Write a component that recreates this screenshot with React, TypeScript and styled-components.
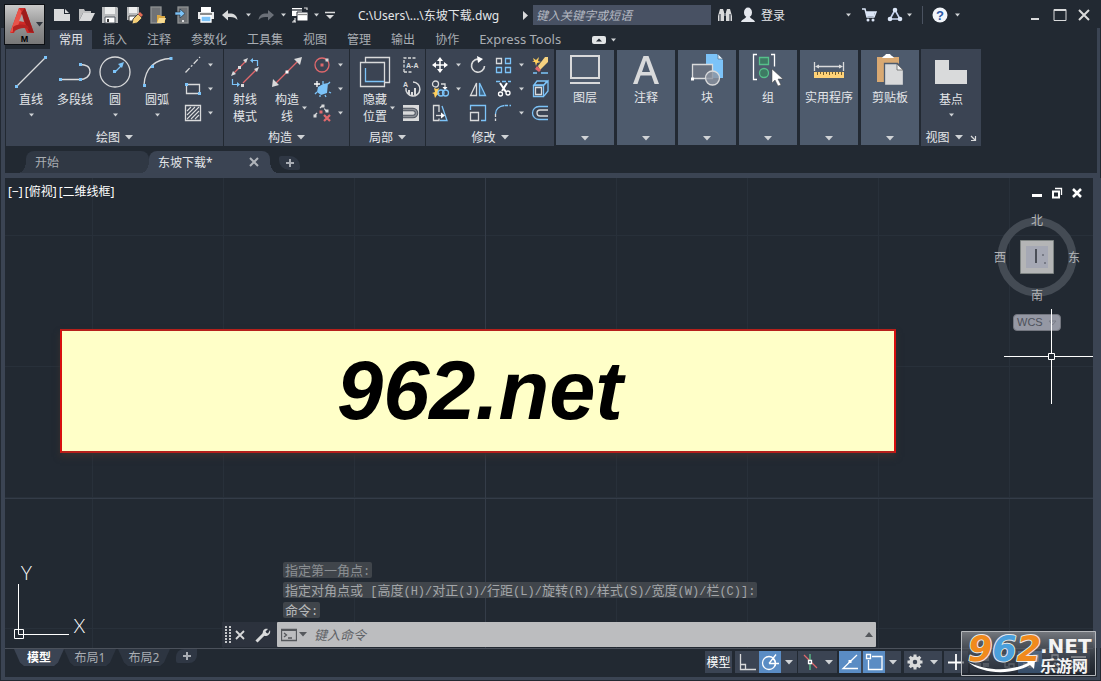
import React from "react";
import styled, { createGlobalStyle } from "styled-components";

const c = {
  base: "#222932",
  panel: "#3b4453",
  panelLight: "#4e5b6d",
  text: "#e4e6e9",
  muted: "#a9adb3",
  icon: "#d9dadb",
  blue: "#7cc3f8",
  red: "#e0686c",
  accent: "#5a8cc4",
};

const Global = createGlobalStyle`
  *, *::before, *::after { box-sizing: border-box; }
  body {
    margin: 0;
    background: ${c.base};
    color: ${c.text};
    font: 12px/17px "Noto Sans", "Noto Sans CJK SC", sans-serif;
  }
  button, input {
    font: inherit;
    color: inherit;
    border: 0;
    padding: 0;
    margin: 0;
    background: none;
    border-radius: 0;
    outline: none;
  }
  button { cursor: pointer; }
  svg { display: block; flex: none; }
`;

/* ---------- shell ---------- */

const Window = styled.div`
  position: relative;
  display: flex;
  flex-direction: column;
  min-height: 100vh;
  background:
    linear-gradient(${c.panel}, ${c.panel}) 1px 28px / 4px calc(100% - 29px) no-repeat,
    linear-gradient(${c.panel}, ${c.panel}) calc(100% - 1px) 28px / 3px calc(100% - 29px) no-repeat,
    linear-gradient(${c.panel}, ${c.panel}) 1px calc(100% - 1px) / calc(100% - 2px) 3px no-repeat,
    ${c.base};
`;

const Header = styled.header`
  display: grid;
  grid-template-columns: 50px 1fr;
  height: 49px;
`;

const AppButton = styled.button`
  width: 41px;
  height: 41px;
  margin: 4px 0 0 4px;
  border: 1px solid #0d1014;
  background: linear-gradient(#c9c9c9, #8f8f8f 60%, #777);
`;

const HeaderRows = styled.div`
  display: grid;
  grid-template-rows: 30px 19px;
  min-width: 0;
`;

const TitleBar = styled.div`
  display: flex;
  align-items: center;
`;

const IconButton = styled.button<{ $w?: number; $h?: number }>`
  display: flex;
  align-items: center;
  justify-content: center;
  flex: none;
  width: ${(p) => p.$w ?? 24}px;
  height: ${(p) => p.$h ?? 24}px;
`;

const FileTitle = styled.div`
  flex: 0 0 181px;
  padding-left: 18px;
  white-space: nowrap;
`;

const Search = styled.input`
  width: 178px;
  height: 20px;
  margin-left: 4px;
  padding: 0 3px;
  background: #485163;
  font-style: italic;
  &::placeholder { color: #b4b9c2; opacity: 1; }
`;

const SignIn = styled.button`
  display: flex;
  align-items: center;
  width: 113px;
  height: 24px;
  white-space: nowrap;
  span { flex: 1; text-align: left; padding-left: 3px; }
`;

const Rule = styled.span`
  width: 1px;
  height: 18px;
  margin: 0 5px 0 6px;
  background: #4a5260;
`;

const Spacer = styled.span`
  flex: 1;
`;

const RibbonTabs = styled.nav`
  display: flex;
  gap: 2px;
`;

const RibbonTab = styled.button<{ $active?: boolean; $latin?: boolean }>`
  height: 19px;
  padding: 0 9px;
  white-space: nowrap;
  font-size: ${(p) => (p.$latin ? 13 : 12)}px;
  color: ${(p) => (p.$active ? c.text : c.muted)};
  background: ${(p) => (p.$active ? c.panel : "none")};
`;

const ToggleGroup = styled.div`
  display: flex;
  align-items: center;
  margin-left: 18px;
`;

/* ---------- ribbon ---------- */

const Ribbon = styled.section`
  display: flex;
  gap: 1px;
  height: 97px;
  padding-left: 6px;
`;

const Panel = styled.div<{ $w: number }>`
  display: flex;
  flex-direction: column;
  flex: 0 0 ${(p) => p.$w}px;
  background: ${c.panel};
`;

const PanelBody = styled.div<{ $pad?: number }>`
  display: flex;
  flex: 1;
  padding-left: ${(p) => p.$pad ?? 0}px;
`;

const PanelFooter = styled.button`
  display: flex;
  align-items: center;
  justify-content: center;
  gap: 5px;
  height: 18px;
`;

const Large = styled.button<{ $w: number }>`
  display: flex;
  flex-direction: column;
  align-items: center;
  gap: 3px;
  flex: 0 0 ${(p) => p.$w}px;
  padding-top: 7px;
  height: 79px;
`;

const LargeLabel = styled.span<{ $arrow?: boolean }>`
  display: grid;
  grid-template-columns: ${(p) => (p.$arrow ? "8px 26px 8px" : "auto")};
  align-items: center;
  justify-items: center;
  line-height: 17px;
  white-space: nowrap;
`;

const TwoLines = styled.span`
  white-space: normal;
  text-align: center;
  grid-column: 2;
`;

const Tools = styled.div<{ $cols: string; $ml?: number }>`
  display: grid;
  grid-template-columns: ${(p) => p.$cols};
  grid-auto-rows: 24px;
  align-content: start;
  align-items: center;
  padding-top: 4px;
  margin-left: ${(p) => p.$ml ?? 4}px;
`;

const CollapsedGroup = styled.div`
  display: flex;
  gap: 3px;
  margin: 1px;
`;

const Collapsed = styled.button`
  display: flex;
  flex-direction: column;
  align-items: center;
  gap: 2px;
  flex: 0 0 58px;
  padding: 3px 0 4px;
  background: ${c.panelLight};
  white-space: nowrap;
  svg:last-child { margin-top: auto; }
`;

/* ---------- file tabs ---------- */

const FileTabs = styled.div`
  display: flex;
  align-items: flex-end;
  height: 32px;
  margin-left: 4px;
  margin-right: 3px;
  padding-left: 22px;
  border-bottom: 5px solid ${c.panel};
`;

const FileTab = styled.div<{ $active?: boolean; $w: number }>`
  --fill: ${(p) => (p.$active ? c.panel : "#303844")};
  position: relative;
  display: flex;
  align-items: center;
  width: ${(p) => p.$w}px;
  height: 22px;
  padding: 0 8px 0 9px;
  background: var(--fill);
  border-radius: 8px 8px 0 0;
  color: ${(p) => (p.$active ? c.text : c.muted)};
  z-index: ${(p) => (p.$active ? 1 : 0)};
  button:first-child { flex: 1; text-align: left; }
  &::before, &::after {
    content: "";
    position: absolute;
    bottom: 0;
    width: 8px;
    height: 12px;
  }
  &::before { left: -8px; background: radial-gradient(ellipse 8px 12px at 0 0, transparent 98%, var(--fill)); }
  &::after { right: -8px; background: radial-gradient(ellipse 8px 12px at 100% 0, transparent 98%, var(--fill)); }
`;

const AddTab = styled.button<{ $bottom?: boolean }>`
  display: flex;
  align-items: center;
  justify-content: center;
  width: 21px;
  height: 14px;
  margin-bottom: 3px;
  margin-left: ${(p) => (p.$bottom ? 4 : 9)}px;
  background: #2f3744;
  border-radius: ${(p) => (p.$bottom ? "8px 0 8px 2px" : "2px 10px 2px 10px")};
`;

/* ---------- drawing area ---------- */

const line = "#28303a";
const Canvas = styled.main`
  position: relative;
  flex: 1;
  min-height: 470px;
  margin: 0 8px 0 5px;
  background:
    linear-gradient(#343c48, #343c48) 480px 0 / 1px 100% no-repeat,
    linear-gradient(#343c48, #343c48) 0 320px / 100% 1px no-repeat,
    linear-gradient(90deg, ${line} 1px, transparent 1px) 87px 0 / 131px 131px,
    linear-gradient(${line} 1px, transparent 1px) 0 57px / 131px 131px,
    ${c.base};
  box-shadow: 8px 0 0 ${c.panel};
`;

const ViewLabels = styled.div`
  display: flex;
  gap: 2px;
  padding: 5px 0 0 3px;
  color: #fff;
  button { white-space: nowrap; }
`;

const ViewControls = styled.div`
  position: absolute;
  top: 7px;
  right: 6px;
  display: flex;
`;

const Banner = styled.h1`
  position: absolute;
  top: 151px;
  left: 55px;
  right: 197px;
  height: 124px;
  margin: 0;
  padding-left: 4px;
  display: flex;
  align-items: center;
  justify-content: center;
  border: 2px solid #b6201b;
  border-left-color: #d80f0f;
  border-right-color: #d80f0f;
  background: #ffffc8;
  box-shadow: 0 4px 6px #35302f;
  color: #000;
  font: italic bold 83px/120px "Liberation Sans", sans-serif;
`;

const Cube = styled.div`
  position: absolute;
  top: 32px;
  right: 12px;
  width: 88px;
  height: 94px;
`;

const Wcs = styled.button`
  position: absolute;
  top: 136px;
  right: 32px;
  display: flex;
  align-items: center;
  gap: 5px;
  width: 48px;
  height: 17px;
  padding-left: 3px;
  border: 1px solid #73767f;
  border-radius: 4px;
  background: #9598a4;
  color: #4d515b;
  font: 11px/13px "Liberation Sans", sans-serif;
`;

const Crosshair = styled.svg`
  position: absolute;
  top: 131px;
  right: 0;
`;

const Ucs = styled.svg`
  position: absolute;
  left: 5px;
  bottom: 0;
  overflow: visible;
`;

const CommandLine = styled.div`
  position: absolute;
  left: 217px;
  right: 217px;
  bottom: 1px;
`;

const History = styled.div`
  display: flex;
  flex-direction: column;
  align-items: flex-start;
  gap: 4px;
  padding: 0 0 4px 61px;
`;

const HistoryLine = styled.span<{ $tone: string }>`
  height: 16px;
  padding: 0 2px;
  border-radius: 2px;
  background: #40454b;
  color: ${(p) => p.$tone};
  font: 13px/16px "Noto Sans CJK SC", sans-serif;
  white-space: pre;
`;

const Mono = styled.span`
  font: 12px/16px "Liberation Mono", monospace;
`;

const CommandRow = styled.div`
  display: flex;
  height: 25px;
  background: #2c323d;
`;

const CommandTools = styled.div`
  display: flex;
  align-items: center;
  flex: 0 0 55px;
  padding-left: 3px;
`;

const Prompt = styled.label`
  display: flex;
  align-items: center;
  flex: 1;
  padding: 0 3px 0 4px;
  background: #bcbdbf;
  border-radius: 1px;
`;

const CommandInput = styled.input`
  flex: 1;
  min-width: 0;
  padding-left: 5px;
  color: #333;
  font: italic 13px/20px "Noto Sans CJK SC", sans-serif;
  &::placeholder { color: #5f6266; opacity: 1; }
`;

/* ---------- bottom bar ---------- */

const BottomBar = styled.footer`
  display: flex;
  justify-content: space-between;
  height: 33px;
  margin: 0 8px 0 5px;
  padding-bottom: 4px;
`;

const LayoutTabs = styled.div`
  display: flex;
  flex: 1;
  padding-left: 9px;
  border-top: 1px solid #4b515b;
`;

const LayoutTab = styled.button<{ $active?: boolean }>`
  width: ${(p) => (p.$active ? 50 : 52)}px;
  margin-right: ${(p) => (p.$active ? 0 : 2)}px;
  height: 17px;
  color: ${(p) => (p.$active ? "#fff" : c.muted)};
  font-weight: ${(p) => (p.$active ? 700 : 400)};
  background: ${(p) => (p.$active ? c.panel : "#2d3541")};
  clip-path: polygon(0 0, 100% 0, calc(100% - 6px) 80%, calc(100% - 10px) 100%, 10px 100%, 6px 80%);
`;

const StatusBar = styled.div`
  display: flex;
  align-items: flex-start;
  padding-top: 2px;
  border-top: 1px solid #4b515b;
`;

const StatusGroup = styled.div<{ $gap?: number }>`
  display: flex;
  margin-right: ${(p) => p.$gap ?? 0}px;
  background: ${c.panel};
`;

const StatusButton = styled.button<{ $on?: boolean; $w?: number }>`
  display: flex;
  align-items: center;
  justify-content: center;
  width: ${(p) => p.$w ?? 24}px;
  height: 22px;
  white-space: nowrap;
  color: #fff;
  background: ${(p) => (p.$on ? c.accent : "none")};
`;

const Watermark = styled.svg`
  position: absolute;
  right: 5px;
  bottom: 5px;
  overflow: visible;
`;

/* ---------- drawings ---------- */

type Draw = { children: React.ReactNode; w?: number; h?: number };
const S = ({ children, w = 20, h = 20 }: Draw) => (
  <svg width={w} height={h} viewBox={`0 0 ${w} ${h}`} fill="none" stroke={c.icon} strokeWidth="1.3">
    {children}
  </svg>
);
const Caret = () => (
  <svg width="5" height="8" viewBox="0 0 5 8" fill="#d0d3d6"><path d="M0 2.500h5L2.500 5.500z" /></svg>
);
const CaretBig = ({ color = "#d0d3d6" }: { color?: string }) => (
  <svg width="8" height="5" viewBox="0 0 8 5" fill={color}><path d="M0 0h8L4 4.500z" /></svg>
);
const Plus = () => (
  <svg width="8" height="8" viewBox="0 0 8 8" stroke="#a8acb3" strokeWidth="2"><path d="M4 0v8M0 4h8" /></svg>
);
const Pt = ({ x, y, f = c.blue }: { x: number; y: number; f?: string }) => (
  <rect x={x - 1.5} y={y - 1.5} width="3" height="3" fill={f} stroke="none" />
);

const NewIcon = () => <S w={18} h={18}><path d="M1 3h10v5h6v7H1z" fill={c.icon} stroke="none" /><path d="M12 3l4 4h-4z" fill={c.icon} stroke="none" /></S>;
const OpenIcon = () => <S w={18} h={18}><path d="M2 15V3h5l1 2h6v2H6z" fill="#bfc0c1" stroke="none" /><path d="M6 7h12l-4 8H2z" fill={c.icon} stroke="none" /></S>;
const SaveIcon = () => (
  <S w={18} h={18}>
    <path d="M1 1h15l1 1v15H1z" fill="#b9bbbd" stroke="none" />
    <path d="M4 1h10v7H4z" fill="#eceded" stroke="none" />
    <path d="M4 11h10v6H4z" fill="#fff" stroke="#555b63" strokeWidth="1" />
    <path d="M6 13h2v3H6z" fill="#333" stroke="none" />
  </S>
);
const SaveAsIcon = () => (
  <S w={18} h={18}>
    <path d="M2 1h12v13H2z" fill="#b9bbbd" stroke="none" /><path d="M4 1h8v6H4z" fill="#eee" stroke="none" />
    <path d="M4 10h8v5H4z" fill="#fff" stroke="#444" strokeWidth="1" />
    <path d="M8 13l5-5 4 4-5 5-5 1z" fill="#f5cf78" stroke="#222932" strokeWidth=".8" /><path d="M13 8l2-2 3 3-2 2z" fill="#e06a55" stroke="none" />
  </S>
);
const TabletOpen = () => (
  <S w={18} h={18}>
    <rect x="2" y="1" width="10" height="16" fill="#6f7276" stroke="#8f9193" />
    <path d="M8 9h3l1 1h4v7H8z" fill="#d9a743" stroke="none" /><path d="M10 12h7l-2 5H8z" fill="#f8dc93" stroke="none" />
  </S>
);
const TabletSave = () => (
  <S w={18} h={18}>
    <rect x="5" y="1" width="10" height="16" fill="#6f7276" stroke="#8f9193" /><path d="M9 15h2" stroke="#fff" />
    <path d="M2 6h5V3l5 4.500-5 4.500V9H2z" fill={c.blue} stroke="#222932" strokeWidth=".6" />
  </S>
);
const PrintIcon = () => (
  <S w={18} h={18}>
    <path d="M4 1h10v5H4z" fill="#fff" stroke="none" /><path d="M1 6h16v7H1z" fill="#e9eaeb" stroke="none" />
    <path d="M3 8h12" stroke="#555" /><path d="M4 10h10v6H4z" fill={c.blue} stroke="#fff" />
  </S>
);
const UndoIcon = ({ flip = false }: { flip?: boolean }) => (
  <S w={18} h={14}>
    <g transform={flip ? "matrix(-1 0 0 1 18 0)" : undefined} fill={flip ? "#6b7078" : c.icon} stroke="none">
      <path d="M1 7l6-5v3.500c5-.5 9 1 9.500 6.500C14.500 9.500 12 8.500 7 9v3.500z" />
    </g>
  </S>
);
const WorkspaceIcon = () => (
  <S w={18} h={18}>
    <path d="M1 2h10v8H1z" fill="#fff" stroke="none" /><path d="M1 4h10" stroke="#222932" />
    <path d="M6 6h11v9H6z" fill="#fff" stroke="#222932" strokeWidth="1" /><path d="M7 8.500h9" stroke="#888" />
    <path d="M13 2h3v2M4 12v4h-3M3 14v2h2" stroke={c.icon} strokeWidth="1.200" />
  </S>
);
const AutodeskA = () => (
  <svg width="39" height="39" viewBox="0 0 39 39">
    <path d="M5 28L14 3h6l9 25h-7l-3-7h-7l-3 7z" fill="#cf2a27" />
    <path d="M14 3l-9 25 6-3 7-16z" fill="#e8534a" />
    <path d="M20 3l9 25-5-1-8-19z" fill="#9f1c1c" />
    <path d="M8 22c5-3 9-3 15-1l1 3c-5-2-10-1-16 3z" fill="#b52321" /><path d="M14 16l3-7 2 8z" fill="#aaa" />
    <path d="M31 17h7l-3.500 4.500z" fill="#33383f" />
    <text x="19.500" y="37" fontSize="9" fontWeight="700" textAnchor="middle" fontFamily="Liberation Sans" fill="#000">M</text>
  </svg>
);
const Binoculars = () => (
  <S w={16} h={16}>
    <path d="M3 2h3l1 3v9H1V9zM13 2h-3L9 5v9h6V9z" fill={c.icon} stroke="none" /><path d="M3 7v7M13 7v7" stroke="#444b55" /><path d="M7 6h2v3H7z" fill="#777d86" stroke="none" />
  </S>
);
const UserIcon = () => (
  <S w={16} h={16}><ellipse cx="8" cy="5.500" rx="4" ry="5" fill="#e5e8ee" stroke="none" /><path d="M1 15c1-3 4-3 5-5h4c1 2 4 2 5 5z" fill="#e5e8ee" stroke="none" /></S>
);
const CartIcon = () => (
  <S w={16} h={16}><path d="M1 2h3l2 8h7l2-5H5" stroke="#dce6f7" strokeWidth="1.500" /><path d="M5 5h9l-1 4H6z" fill="#dce6f7" stroke="none" /><circle cx="7" cy="13" r="1.500" fill="#dce6f7" stroke="none" /><circle cx="12" cy="13" r="1.500" fill="#dce6f7" stroke="none" /></S>
);
const HubIcon = () => (
  <S w={16} h={16}><path d="M8 3L3 12h10z" stroke="#c6d2ee" strokeWidth="1.600" /><g fill="#dce6f7" stroke="none"><circle cx="8" cy="3" r="2.300" /><circle cx="3" cy="12" r="2.300" /><circle cx="13" cy="12" r="2.300" /></g></S>
);
const HelpIcon = () => (
  <svg width="16" height="16" viewBox="0 0 16 16"><circle cx="8" cy="8" r="7.500" fill="#f2f5fa" /><text x="8" y="12.500" fontSize="13" fontWeight="700" fontFamily="Liberation Sans" textAnchor="middle" fill="#2b57a5">?</text></svg>
);

const LineIcon = () => <S w={32} h={32}><path d="M1.500 30.500L30.500 1.500" /><Pt x={1.500} y={30.500} /><Pt x={30.500} y={1.500} /></S>;
const PolylineIcon = () => <S w={32} h={32}><path d="M1 23.500h20c5 0 10-3 10-8s-4-7-10-7" /><Pt x={1.500} y={23.500} /><Pt x={21.500} y={23.500} /><Pt x={21.500} y={8.500} /></S>;
const CircleIcon = () => <S w={32} h={32}><circle cx="16" cy="16" r="15" /><path d="M16 16l7-7" stroke={c.blue} /><path d="M19 8l6-2-2 6z" fill={c.blue} stroke="none" /><Pt x={15.500} y={15.500} /></S>;
const ArcIcon = () => <S w={32} h={32}><path d="M3 29C4 12 14 3 30 2.500" /><Pt x={3.500} y={29.500} /><Pt x={11.500} y={10.500} /><Pt x={30} y={2.500} /></S>;
const Dashed = () => <S><path d="M2.500 17.500L17 2" strokeDasharray="6 2 2 2" /></S>;
const RectIcon = () => <S><path d="M3.500 5.500h13v9h-13z" /><Pt x={3.500} y={5.500} /><Pt x={16.500} y={14.500} /></S>;
const HatchIcon = () => <S><path d="M2.500 2.500h15v15h-15z" /><path d="M4 8l4-4M4 12l8-8M4 16l12-12M8 16l8-8M12 16l4-4" strokeWidth="1.100" /></S>;
const RayIcon = () => (
  <S w={32} h={32}>
    <path d="M5 17L17 5M14 27L28 13" stroke={c.red} />
    <g fill={c.icon} stroke="none"><path d="M19 2l-2 5-3-3zM2 20l2-5 3 3zM30 11l-2 5-3-3z" /></g>
    <Pt x={10.500} y={11.500} f={c.icon} /><Pt x={13.500} y={29.500} f={c.icon} />
    <path d="M28.500 10V4.500H24M3.500 23v5.500H8" stroke={c.blue} strokeWidth="1.200" /><path d="M24 2v5l-3-2.500zM8 26v5l3-2.500z" fill={c.blue} stroke="none" />
  </S>
);
const XlineIcon = () => (
  <S w={32} h={32}><path d="M5 27L27 5" stroke={c.red} /><path d="M31 1l-2 8-6-6zM1 31l1-8 6 6z" fill={c.icon} stroke="none" /><Pt x={16} y={16} f="#fff" /></S>
);
const RedCircle = () => <S><circle cx="10" cy="10" r="7" stroke={c.red} /><Pt x={10} y={10} f={c.red} /><Pt x={15} y={5} f={c.icon} /></S>;
const Blob = () => <S><path d="M6 8l5-3 5-1-1 10-6 2-4-3z" fill={c.blue} stroke="none" /><path d="M2 5h6M5 2v6" stroke="#fff" /><path d="M3 15l2-2M8 18v-2M14 18l-1-2M17 13l2 1M16 5l2-2M11 2v3" stroke={c.blue} /></S>;
const DelConstraint = () => <S><path d="M3 12l3-3M8 5l2-2M14 8l-2-3" strokeDasharray="3 2" /><Pt x={3} y={13} f={c.icon} /><Pt x={11} y={3} f={c.icon} /><Pt x={9} y={9} f={c.red} /><Pt x={15} y={8} f={c.icon} /><path d="M12 12l6 6M18 12l-6 6" stroke={c.red} strokeWidth="2.200" /></S>;
const HiddenIcon = () => <S w={32} h={32}><path d="M6.500 6V1.500h24v25H26" /><path d="M1.500 6.500h24v24h-24z" /><path d="M6.500 12v13.500H25" stroke={c.blue} /></S>;
const AAIcon = () => (
  <S><path d="M3 17V3h13" strokeDasharray="3 1.500" /><path d="M3 17h8" strokeDasharray="3 1.500" /><text x="5" y="13" fontSize="7" fontWeight="700" fontFamily="Liberation Sans" stroke="none" fill={c.icon}>A-A</text></S>
);
const AGauge = () => (
  <S><path d="M5 9a7 7 0 1 0 7-6" strokeWidth="1.500" /><path d="M8 16v-5M11 17v-4M14 16V9" strokeWidth="2" /><text x="2" y="8" fontSize="7" fontWeight="700" fontFamily="Liberation Sans" stroke="none" fill={c.icon}>A</text></S>
);
const Slot = () => <S><path d="M2 2h16v16H2z" fill={c.icon} stroke="none" /><path d="M2 6.500h10a3.500 3.500 0 0 1 0 7H2" stroke="#4f5661" strokeWidth="3.500" /><path d="M2 6.500h10a3.500 3.500 0 0 1 0 7H2" stroke="#8b8f96" strokeWidth="1.500" /></S>;
const MoveIcon = () => <S><path d="M10 4v12M4 10h12" stroke="#fff" strokeWidth="1.500" /><path d="M10 2l3 4H7zM10 18l3-4H7zM2 10l4-3v6zM18 10l-4-3v6z" fill="#fff" stroke="none" /></S>;
const RotateIcon = () => <S><path d="M12 4.500A6.500 6.500 0 1 0 16.500 11" strokeWidth="1.600" /><path d="M9 1l6 3-5 4z" fill="#fff" stroke="none" /></S>;
const ArrayIcon = () => <S><path d="M3.500 3.500h5v5h-5z" /><path d="M12.500 3.500h5v5h-5zM3.500 12.500h5v5h-5zM12.500 12.500h5v5h-5z" stroke={c.blue} /></S>;
const EraseIcon = () => <S><path d="M8 11l7-9h3v5l-8 8z" fill="#f6d27f" stroke="none" /><path d="M7 11l4 4-2 2-4-3z" fill="#e0686c" stroke="none" /><path d="M3 3l3 2 3-3-1 4 3 1-4 1-1 3-1-4-3 0 2-1z" fill="#ffcf5c" stroke="none" /><path d="M3 18h4M11 18h7" stroke={c.blue} /></S>;
const CopyIcon = () => <S><circle cx="5.500" cy="5" r="3" /><path d="M11 5h4v4" /><path d="M12.500 8h5L15 11z" fill="#fff" stroke="none" /><path d="M4 9l3 1 2-1-1 4 2 2-3 1-2 3-1-4-2-1 3-1z" fill="#ffcf5c" stroke="none" /><circle cx="11" cy="14" r="3" stroke={c.blue} /><circle cx="15.500" cy="14" r="3" stroke={c.blue} /></S>;
const MirrorIcon = () => <S><path d="M8.500 4v12.500h-6z" /><path d="M11.500 4v12.500h6z" stroke={c.blue} fill="#3d6485" /></S>;
const TrimIcon = () => <S><path d="M3 2.500h15" stroke={c.blue} strokeDasharray="4 2" /><path d="M7 4l6 9M14 4L9 12" stroke="#fff" strokeWidth="2" /><circle cx="7.500" cy="15" r="2" stroke="#fff" /><circle cx="15" cy="14" r="2" stroke="#fff" /></S>;
const BoxIcon = () => <S><path d="M4 6l3-4h10l-3 4zM14 6l4-4v10l-4 5" stroke={c.blue} /><path d="M3.500 6.500h10v11h-10z" stroke={c.blue} /><path d="M5.500 8.500h6v7h-6z" /></S>;
const StretchIcon = () => <S><path d="M9 9V2.500H3.500v15H9v-2" /><path d="M12 3l5 14.500h-7" stroke={c.blue} /><path d="M6 12.500h6" /><path d="M11 9.500l4 3-4 3z" fill="#fff" stroke="none" /></S>;
const ScaleIcon = () => <S><path d="M2.500 7V2.500h15v15H13" stroke={c.blue} /><path d="M2.500 9.500h8v8h-8z" /></S>;
const FilletIcon = () => <S><path d="M2.500 11c0-5 4-8 9-8.500" stroke={c.blue} /><path d="M12 2.500h6" stroke={c.blue} strokeDasharray="3 1.500" /><path d="M2.500 11v7" strokeDasharray="3 1.500" /></S>;
const OffsetIcon = () => <S><path d="M18 3.500H9a6.500 6.500 0 0 0 0 13h9" stroke={c.blue} /><path d="M18 7H10a3 3 0 0 0 0 6h8" /></S>;

const LayersIcon = () => <S w={36} h={34}><path d="M4 3h28v22H4z" strokeWidth="2" /><path d="M3 30h30" strokeWidth="2" /></S>;
const AnnotIcon = () => (
  <S w={36} h={34}><path d="M5 31L15.500 3h5L31 31h-4.500l-3-8.500h-11l-3 8.500zM14 19h8L18 7.500z" fill={c.icon} fillRule="evenodd" stroke="none" /></S>
);
const BlockIcon = () => (
  <S w={36} h={34}><path d="M17 1h11l6 6v18H17z" fill={c.blue} stroke="none" /><path d="M29 1l5 5h-5z" fill="#e2f2ff" stroke={c.panelLight} strokeWidth=".6" /><path d="M3.500 11.500h20v14h-20z" fill="#69717f" /><circle cx="23.500" cy="25" r="7" fill="#8c93a0cc" /><Pt x={3.500} y={26} f="#fff" /></S>
);
const GroupIcon = () => (
  <S w={36} h={34}><path d="M7 1.500H3.500v25H7M21 1.500h3.500v12" stroke="#fff" /><path d="M9.500 4.500h9v7h-9z" fill="#3e7a63" stroke="#56c08a" /><circle cx="14" cy="20" r="4.500" fill="#3e7a63" stroke="#56c08a" /><path d="M22 16v14l3-3 3 6 3-1-3-6h5z" fill="#fff" stroke="#444" strokeWidth=".5" /></S>
);
const RulerIcon = () => (
  <S w={36} h={34}><path d="M3.500 9v9M32.500 9v9M6 13.500h24" /><path d="M4 13.500l4-2v4zM32 13.500l-4-2v4z" fill={c.icon} stroke="none" /><path d="M3 19h30v6H3z" fill="#ffd277" stroke="none" /><path d="M6.500 19v3M9.500 19v2M12.500 19v3M15.500 19v2M18.500 19v3M21.500 19v2M24.500 19v3M27.500 19v2M30.500 19v3" stroke="#76602f" strokeWidth="1" /></S>
);
const ClipIcon = () => (
  <S w={36} h={34}><path d="M5 4h22v25H5z" fill="#d9a972" stroke="none" /><path d="M10 5c1-2 3-2 4-4h4c1 2 3 2 4 4z" fill="#fff" stroke="none" /><path d="M12.500 10.500h13l6 6v16h-19z" fill={c.icon} stroke="#4e5b6d" /><path d="M25 11l6 6h-6z" fill="#f2f2f2" stroke="#555" strokeWidth=".7" /></S>
);
const BaseIcon = () => <S w={32} h={32}><path d="M0 4h14v10h18v14H0z" fill={c.icon} stroke="none" /></S>;

/* ---------- pieces ---------- */

type LargeProps = { w: number; icon: React.ReactNode; label: string; menu?: boolean; twoLine?: boolean; side?: boolean };
const LargeTool = ({ w, icon, label, menu, twoLine, side }: LargeProps) => (
  <Large $w={w}>
    {icon}
    <LargeLabel $arrow={twoLine}>
      {twoLine ? <TwoLines>{label}</TwoLines> : label}
      {side && <Caret />}
    </LargeLabel>
    {menu && <Caret />}
  </Large>
);

const Small = ({ icon, name }: { icon: React.ReactNode; name: string }) => (
  <IconButton $w={20} aria-label={name}>{icon}</IconButton>
);
const Menu = ({ w = 12, name = "展开" }: { w?: number; name?: string }) => (
  <IconButton $w={w} aria-label={name}><Caret /></IconButton>
);
const Footer = ({ label }: { label: string }) => (
  <PanelFooter>{label}<CaretBig /></PanelFooter>
);

const mixed = (text: string) =>
  text.split(/([\x20-\x7e]+)/).map((t, i) => (i % 2 ? <Mono key={i}>{t}</Mono> : t));

const tabs = ["常用", "插入", "注释", "参数化", "工具集", "视图", "管理", "输出", "协作", "Express Tools"];
const collapsed: [string, React.ReactNode][] = [
  ["图层", <LayersIcon />],
  ["注释", <AnnotIcon />],
  ["块", <BlockIcon />],
  ["组", <GroupIcon />],
  ["实用程序", <RulerIcon />],
  ["剪贴板", <ClipIcon />],
];
const fileTools: [string, React.ReactNode][] = [
  ["新建", <NewIcon />],
  ["打开", <OpenIcon />],
  ["保存", <SaveIcon />],
  ["另存为", <SaveAsIcon />],
  ["从移动设备打开", <TabletOpen />],
  ["保存到移动设备", <TabletSave />],
  ["打印", <PrintIcon />],
  ["放弃", <UndoIcon />],
];

export default function App() {
  return (
    <Window>
      <Global />
      <Header>
        <AppButton aria-label="应用程序菜单"><AutodeskA /></AppButton>
        <HeaderRows>
          <TitleBar>
            {fileTools.map(([name, icon]) => (
              <IconButton key={name} aria-label={name}>{icon}</IconButton>
            ))}
            <Menu />
            <IconButton aria-label="重做"><UndoIcon flip /></IconButton>
            <Menu w={10} />
            <IconButton aria-label="工作空间"><WorkspaceIcon /></IconButton>
            <Menu w={8} />
            <IconButton $w={20} aria-label="自定义快速访问工具栏">
              <S w={10} h={8}><path d="M0 1.500h10" strokeWidth="1.500" /><path d="M1 4h8L5 8z" fill={c.icon} stroke="none" /></S>
            </IconButton>
            <FileTitle>C:\Users\...\东坡下载.dwg</FileTitle>
            <IconButton $w={8} aria-label="展开搜索">
              <svg width="5" height="9" viewBox="0 0 5 9" fill={c.icon}><path d="M0 0v9l5-4.500z" /></svg>
            </IconButton>
            <Search aria-label="搜索" placeholder="键入关键字或短语" />
            <IconButton $w={27} aria-label="查找"><Binoculars /></IconButton>
            <SignIn>
              <IconButton as="i" $w={20}><UserIcon /></IconButton>
              <span>登录</span>
              <Caret />
            </SignIn>
            <IconButton $w={36} aria-label="应用商店"><CartIcon /></IconButton>
            <IconButton $w={16} aria-label="保持连接"><HubIcon /></IconButton>
            <Menu w={13} />
            <Rule />
            <IconButton aria-label="帮助"><HelpIcon /></IconButton>
            <Menu w={10} />
            <Spacer />
            <IconButton aria-label="最小化"><S w={12} h={12}><path d="M1 10h8" strokeWidth="2" /></S></IconButton>
            <IconButton aria-label="最大化"><S w={14} h={14}><path d="M1 1.500h12v11H1z" strokeWidth="1" /><path d="M1 2h12" strokeWidth="2" /></S></IconButton>
            <IconButton aria-label="关闭"><S w={14} h={14}><path d="M2 2l10 10M12 2L2 12" strokeWidth="2" /></S></IconButton>
            <IconButton as="i" $w={5} />
          </TitleBar>
          <RibbonTabs>
            {tabs.map((t, i) => (
              <RibbonTab key={t} $active={i === 0} $latin={t === "Express Tools"}>{t}</RibbonTab>
            ))}
            <ToggleGroup>
              <IconButton $w={17} $h={16} aria-label="最小化功能区">
                <svg width="14" height="8" viewBox="0 0 14 8"><rect width="14" height="8" rx="2" fill="#e2e4e6" /><path d="M4 5.500h6L7 2.500z" fill="#222932" /></svg>
              </IconButton>
              <Menu />
            </ToggleGroup>
          </RibbonTabs>
        </HeaderRows>
      </Header>

      <Ribbon>
        <Panel $w={217}>
          <PanelBody $pad={4}>
            <LargeTool w={42} icon={<LineIcon />} label="直线" menu />
            <LargeTool w={46} icon={<PolylineIcon />} label="多段线" />
            <LargeTool w={34} icon={<CircleIcon />} label="圆" menu />
            <LargeTool w={50} icon={<ArcIcon />} label="圆弧" menu />
            <Tools $cols="21px 12px" $ml={1}>
              <Small name="构造线" icon={<Dashed />} /><Menu />
              <Small name="矩形" icon={<RectIcon />} /><Menu />
              <Small name="图案填充" icon={<HatchIcon />} /><Menu />
            </Tools>
          </PanelBody>
          <Footer label="绘图" />
        </Panel>

        <Panel $w={125}>
          <PanelBody>
            <LargeTool w={42} icon={<RayIcon />} label="射线模式" twoLine />
            <LargeTool w={42} icon={<XlineIcon />} label="构造线" twoLine side />
            <Tools $cols="22px 12px">
              <Small name="构造圆" icon={<RedCircle />} /><Menu />
              <Small name="构造区域" icon={<Blob />} /><Menu />
              <Small name="删除构造" icon={<DelConstraint />} /><Menu />
            </Tools>
          </PanelBody>
          <Footer label="构造" />
        </Panel>

        <Panel $w={75}>
          <PanelBody $pad={4}>
            <LargeTool w={42} icon={<HiddenIcon />} label="隐藏位置" twoLine side />
            <Tools $cols="20px" $ml={5}>
              <Small name="剖切" icon={<AAIcon />} />
              <Small name="详图" icon={<AGauge />} />
              <Small name="断面" icon={<Slot />} />
            </Tools>
          </PanelBody>
          <Footer label="局部" />
        </Panel>

        <Panel $w={128}>
          <PanelBody>
            <Tools $cols="22px 16px 25px 20px 17px 20px">
              <Small name="移动" icon={<MoveIcon />} /><Menu />
              <Small name="旋转" icon={<RotateIcon />} />
              <Small name="阵列" icon={<ArrayIcon />} /><Menu w={16} />
              <Small name="删除" icon={<EraseIcon />} />
              <Small name="复制" icon={<CopyIcon />} /><Menu />
              <Small name="镜像" icon={<MirrorIcon />} />
              <Small name="修剪" icon={<TrimIcon />} /><Menu w={16} />
              <Small name="分解" icon={<BoxIcon />} />
              <Small name="拉伸" icon={<StretchIcon />} /><span />
              <Small name="缩放" icon={<ScaleIcon />} />
              <Small name="圆角" icon={<FilletIcon />} /><Menu w={16} />
              <Small name="偏移" icon={<OffsetIcon />} />
            </Tools>
          </PanelBody>
          <Footer label="修改" />
        </Panel>

        <CollapsedGroup>
          {collapsed.map(([label, icon]) => (
            <Collapsed key={label}>
              {icon}
              {label}
              <CaretBig />
            </Collapsed>
          ))}
        </CollapsedGroup>

        <Panel $w={60}>
          <PanelBody>
            <LargeTool w={60} icon={<BaseIcon />} label="基点" menu />
          </PanelBody>
          <PanelFooter>
            视图<CaretBig />
            <S w={9} h={9}><path d="M3 3l4 4M7.500 3v4.500H3" strokeWidth="1.200" /></S>
          </PanelFooter>
        </Panel>
      </Ribbon>

      <FileTabs>
        <FileTab $w={123}><button>开始</button></FileTab>
        <FileTab $w={121} $active>
          <button>东坡下载*</button>
          <IconButton $w={16} $h={16} aria-label="关闭图形">
            <S w={10} h={10}><path d="M1 1l8 8M9 1L1 9" stroke="#b0b4ba" strokeWidth="2" /></S>
          </IconButton>
        </FileTab>
        <AddTab aria-label="新图形"><Plus /></AddTab>
      </FileTabs>

      <Canvas>
        <ViewLabels>
          <button>[−]</button>
          <button>[俯视]</button>
          <button>[二维线框]</button>
        </ViewLabels>
        <ViewControls>
          <IconButton $w={20} $h={16} aria-label="最小化视口"><S w={12} h={12}><path d="M1 8.500h10" stroke="#fff" strokeWidth="3" /></S></IconButton>
          <IconButton $w={20} $h={16} aria-label="还原视口"><S w={12} h={12}><path d="M4 1.500h6.500V8" stroke="#fff" /><path d="M2 4.500h6v6H2z" stroke="#fff" strokeWidth="2" /></S></IconButton>
          <IconButton $w={20} $h={16} aria-label="关闭视口"><S w={10} h={10}><path d="M1 1l8 8M9 1L1 9" stroke="#fff" strokeWidth="2.500" /></S></IconButton>
        </ViewControls>

        <Banner>962.net</Banner>

        <Cube>
          <svg width="88" height="94" viewBox="0 0 88 94" fontFamily="Noto Sans CJK SC" fontSize="12" fill="#b3b5b8" textAnchor="middle">
            <circle cx="44" cy="47" r="35.500" fill="none" stroke="#444b54" strokeWidth="8" />
            <path d="M27.500 30.500h33v33h-33z" fill="#b4b5b6" stroke="#7d8382" />
            <path d="M33 36h22v22H33z" fill="#a5a8b4" />
            <path d="M43 39v14" stroke="#4b4f58" strokeWidth="2" /><path d="M49 45h2M51 53h2" stroke="#4b4f58" />
            <text x="44" y="15">北</text><text x="44" y="90">南</text>
            <text x="7" y="52">西</text><text x="81" y="52">东</text>
          </svg>
        </Cube>
        <Wcs>WCS<svg width="9" height="6" viewBox="0 0 9 6" fill="none" stroke="#7b7e89"><path d="M1 1h7L4.500 5z" /></svg></Wcs>
        <Crosshair width="89" height="95" viewBox="0 0 89 95" fill="none" stroke="#fff">
          <path d="M47.500 0v44M47.500 51v44M0 47.500h44M51 47.500h38M44.500 44.500h6v6h-6z" />
        </Crosshair>
        <Ucs width="80" height="90" viewBox="0 -10 80 90" fill="none" stroke="#fff">
          <path d="M8.500 16v50.500H59M4.500 61.500h9v9h-9z" />
          <g fill="#fff" stroke="none" fontFamily="Lato" fontWeight="300" fontSize="19" textAnchor="middle">
            <text x="16.500" y="12">Y</text><text x="69.500" y="65">X</text>
          </g>
        </Ucs>

        <CommandLine>
          <History>
            <HistoryLine $tone="#8b8f93">{mixed("指定第一角点:")}</HistoryLine>
            <HistoryLine $tone="#a3a6a9">{mixed("指定对角点或 [高度(H)/对正(J)/行距(L)/旋转(R)/样式(S)/宽度(W)/栏(C)]:")}</HistoryLine>
            <HistoryLine $tone="#b8babc">{mixed("命令:")}</HistoryLine>
          </History>
          <CommandRow>
            <CommandTools>
              <svg width="6" height="18" viewBox="0 0 6 18" stroke="#c5c7ca" strokeWidth="2" strokeDasharray="2 1"><path d="M1 0v18M5 0v18" /></svg>
              <IconButton $w={18} aria-label="关闭命令行"><S w={10} h={10}><path d="M1 1l8 8M9 1L1 9" strokeWidth="1.800" /></S></IconButton>
              <IconButton $w={28} aria-label="自定义">
                <S w={16} h={16}><path d="M1.500 14.500L9 7" strokeWidth="3" /><path d="M8 8C7 4 9 1 13 2l-2.500 2.500 1 1.500 1.500.500L15 3c1 4-2 6-5 6z" fill={c.icon} stroke="none" /></S>
              </IconButton>
            </CommandTools>
            <Prompt>
              <S w={16} h={14}><path d="M.500 1.500h15v11H.500z" stroke="#55585c" /><path d="M0 2h16" stroke="#55585c" strokeWidth="2" /><path d="M3 5l2.500 2L3 9M7 10h4" stroke="#55585c" /></S>
              <IconButton as="i" $w={12}><CaretBig color="#55585c" /></IconButton>
              <CommandInput aria-label="命令" placeholder="键入命令" />
              <svg width="8" height="5" viewBox="0 0 8 5" fill="#55585c"><path d="M0 5h8L4 0z" /></svg>
            </Prompt>
          </CommandRow>
        </CommandLine>
      </Canvas>

      <BottomBar>
        <LayoutTabs>
          <LayoutTab $active>模型</LayoutTab>
          <LayoutTab>布局1</LayoutTab>
          <LayoutTab>布局2</LayoutTab>
          <AddTab $bottom aria-label="新布局"><Plus /></AddTab>
        </LayoutTabs>
        <StatusBar>
          <StatusGroup $gap={3}><StatusButton $w={27}>模型</StatusButton></StatusGroup>
          <StatusGroup $gap={1}>
            <StatusButton aria-label="正交"><S><path d="M3.500 2v15.500H19M3.500 12.500h5v5" /></S></StatusButton>
            <StatusButton $on $w={22} aria-label="极轴追踪"><S><circle cx="9" cy="11" r="6.500" stroke="#fff" /><path d="M9 11.500h10M9 11.500l7-9M13 7a6 6 0 0 1 2 7" stroke="#fff" /></S></StatusButton>
            <StatusButton $w={16} aria-label="极轴选项"><CaretBig /></StatusButton>
          </StatusGroup>
          <StatusGroup $gap={2}>
            <StatusButton $w={23} aria-label="等轴测草图"><S><path d="M4 3l13 13" stroke={c.red} /><path d="M10 2v16" stroke="#5cc58a" /><path d="M8.500 8.500h3v3h-3z" stroke="#fff" fill={c.panel} /></S></StatusButton>
            <StatusButton $w={16} aria-label="等轴测选项"><CaretBig /></StatusButton>
          </StatusGroup>
          <StatusGroup $gap={3}>
            <StatusButton $on $w={22} aria-label="对象捕捉追踪"><S><path d="M17 3L3 16.500h15" stroke="#fff" /><Pt x={10} y={9.500} f="#fff" /></S></StatusButton>
            <StatusButton as="i" $w={2} />
            <StatusButton $on $w={22} aria-label="对象捕捉"><S><path d="M8 4.500h10v13H4.500V8M2.500 2.500h4v4h-4z" stroke="#fff" /></S></StatusButton>
            <StatusButton $w={16} aria-label="捕捉选项"><CaretBig /></StatusButton>
          </StatusGroup>
          <StatusGroup $gap={2}>
            <StatusButton $w={22} aria-label="切换工作空间"><S><circle cx="10" cy="10" r="4" strokeWidth="3.500" /><path d="M10 2.500v3M10 14.500v3M2.500 10h3M14.500 10h3M4.700 4.700l2 2M13.300 13.300l2 2M15.300 4.700l-2 2M6.700 13.300l-2 2" strokeWidth="3" /></S></StatusButton>
            <StatusButton $w={16} aria-label="工作空间选项"><CaretBig /></StatusButton>
          </StatusGroup>
          <StatusGroup $gap={2}><StatusButton aria-label="注释监视器"><S><path d="M10 2v16M2 10.500h16" stroke="#fff" strokeWidth="1.800" /></S></StatusButton></StatusGroup>
          <StatusGroup $gap={3}>
            <StatusButton aria-label="单位"><S><path d="M3 5h6v4H3zM11 5h6v4h-6zM3 11h6v4H3zM11 11h6v4h-6z" fill="#8b9099" stroke="none" /></S></StatusButton>
            <StatusButton aria-label="快捷特性"><S><path d="M6 3h6v5H6zM9 8v7h3M13 12h5v4h-5z" stroke="#9ba0a8" /></S></StatusButton>
            <StatusButton $on aria-label="图形性能"><S><path d="M3 3h5v6H3zM11 3v13M14 3h4v6h-4zM3 12h6v4" /></S></StatusButton>
            <StatusButton aria-label="隔离对象"><S><path d="M8 3h6v5H8zM11 11l5 6H6z" /></S></StatusButton>
            <StatusButton aria-label="自定义"><S><path d="M3 5h15M3 10h15M3 15h15" strokeWidth="2" /></S></StatusButton>
          </StatusGroup>
        </StatusBar>
      </BottomBar>

      <Watermark width="135" height="45" viewBox="0 0 135 45">
        <defs>
          <linearGradient id="plate" x1="0" y1="0" x2="0" y2="1">
            <stop offset="0" stopColor="#8a8d92" stopOpacity=".8" />
            <stop offset=".6" stopColor="#3a3f48" stopOpacity=".6" />
            <stop offset="1" stopColor="#1a1e26" stopOpacity=".6" />
          </linearGradient>
        </defs>
        <path d="M.500.500h134v44H.500z" fill="url(#plate)" stroke="#b5b8bc" />
        <g fontFamily="DejaVu Sans" fontWeight="700" fontStyle="italic" fontSize="35" stroke="#e8e8e8" strokeWidth="2" strokeLinejoin="round" paintOrder="stroke">
          <text x="7" y="30" fill="#f08a1d">9<tspan fill="#4a9fdb">6</tspan><tspan fill="#f08a1d">2</tspan></text>
        </g>
        <path d="M7 31c14 12 42 14 62 3l4 4 1-8-9 0 2 2C49 41 26 40 7 31z" fill="#fff" />
        <g fill="#f4f4f4" fontWeight="700">
          <text x="79" y="22" fontFamily="DejaVu Sans" fontSize="20">.NET</text>
          <text x="79" y="41" fontFamily="Noto Sans CJK SC" fontSize="16">乐游网</text>
        </g>
      </Watermark>
    </Window>
  );
}
